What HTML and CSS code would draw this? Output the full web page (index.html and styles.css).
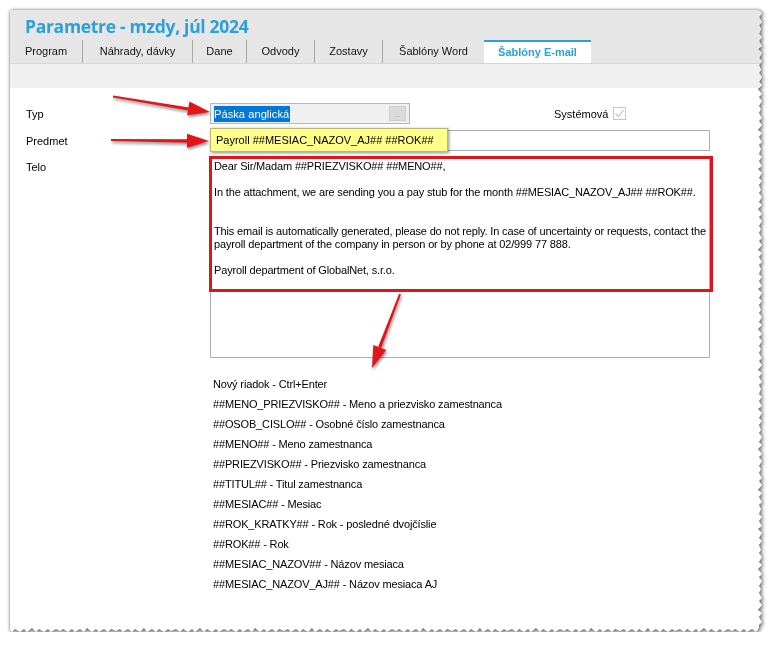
FILE: index.html
```html
<!DOCTYPE html>
<html lang="sk">
<head>
    <meta charset="UTF-8">
    <meta name="viewport" content="width=device-width, initial-scale=1.0">
    <title>Parametre - mzdy, júl 2024</title>
    <link rel="stylesheet" href="styles.css">
</head>
<body>
    <div class="shot">
        <div class="window" id="win">
            <div class="header">
                <h1 class="title">Parametre - mzdy, júl 2024</h1>
                <div class="tabs">
                    <div class="tab tab-program">Program</div>
                    <div class="tab tab-nahrady">Náhrady, dávky</div>
                    <div class="tab tab-dane">Dane</div>
                    <div class="tab tab-odvody">Odvody</div>
                    <div class="tab tab-zostavy">Zostavy</div>
                    <div class="tab tab-word">Šablóny Word</div>
                    <div class="tab tab-email active">Šablóny E-mail</div>
                </div>
            </div>
            <div class="toolbar"></div>

            <div class="content">
                <div class="row">
                    <div class="label">Typ</div>
                    <div class="select">
                        <span class="selected">Páska anglická</span>
                        <span class="dots">...</span>
                    </div>
                    <div class="system">
                        Systémová
                        <span class="check">
                            <svg width="11" height="11" viewBox="0 0 11 11"><path d="M1.5 5.5 L4.3 8.3 L9.6 2.2" fill="none" stroke="#c4c4c4" stroke-width="1.2"/></svg>
                        </span>
                    </div>
                </div>

                <div class="row">
                    <div class="label">Predmet</div>
                    <div class="input">
                        <span class="callout">Payroll ##MESIAC_NAZOV_AJ## ##ROK##</span>
                    </div>
                </div>

                <div class="row row-top">
                    <div class="label label-top">Telo</div>
                    <div class="textarea">
                        <div class="body-text">
                            <p>Dear Sir/Madam ##PRIEZVISKO## ##MENO##,</p>
                            <p>In the attachment, we are sending you a pay stub for the month ##MESIAC_NAZOV_AJ## ##ROK##.</p>
                            <p class="gap2">This email is automatically generated, please do not reply. In case of uncertainty or requests, contact the payroll department of the company in person or by phone at 02/999 77 888.</p>
                            <p>Payroll department of GlobalNet, s.r.o.</p>
                        </div>
                        <div class="red-box"></div>
                    </div>
                </div>

                <ul class="help">
                    <li>Nový riadok - Ctrl+Enter</li>
                    <li>##MENO_PRIEZVISKO## - Meno a priezvisko zamestnanca</li>
                    <li>##OSOB_CISLO## - Osobné číslo zamestnanca</li>
                    <li>##MENO## - Meno zamestnanca</li>
                    <li>##PRIEZVISKO## - Priezvisko zamestnanca</li>
                    <li>##TITUL## - Titul zamestnanca</li>
                    <li>##MESIAC## - Mesiac</li>
                    <li>##ROK_KRATKY## - Rok - posledné dvojčíslie</li>
                    <li>##ROK## - Rok</li>
                    <li>##MESIAC_NAZOV## - Názov mesiaca</li>
                    <li>##MESIAC_NAZOV_AJ## - Názov mesiaca AJ</li>
                </ul>
            </div>

            <!-- annotation arrows -->
            <svg class="arrows" width="752" height="622" viewBox="0 0 752 622">
                <g fill="#e4141b" stroke="none">
                    <polygon points="103,85.5 179,97.4 178.4,100.6 103,87.5"/>
                    <polygon points="200,102 177.2,105.3 179.4,91.5"/>
                    <polygon points="101,129 178,129.2 178,132.8 101,131"/>
                    <polygon points="199,131 177,137.8 177,123.8"/>
                    <polygon points="389.1,283.7 391,284.3 371.2,338 368.2,336.8"/>
                    <polygon points="362,358 363.3,334.9 376.3,339.9"/>
                </g>
            </svg>
        </div>
    </div>

    <script>
        // torn paper edge on the right and bottom side
        const win = document.getElementById('win');

        function tornEdge() {
            const w = win.offsetWidth;
            const h = win.offsetHeight;
            const pts = ['0px 0px', (w - 4) + 'px 0px'];
            let y = 0;
            let i = 0;
            while (y < h - 4) {
                const x = w - (i % 2 ? 0 : 3) - (i % 5 === 0 ? 1 : 0);
                pts.push(x + 'px ' + y + 'px');
                y += 3 + (i % 3);
                i++;
            }
            let x = w - 3;
            i = 0;
            while (x > 0) {
                const yy = h - (i % 2 ? 0 : 3) - (i % 7 === 0 ? 1 : 0);
                pts.push(x + 'px ' + yy + 'px');
                x -= 3 + (i % 3);
                i++;
            }
            pts.push('0px ' + (h - 2) + 'px');
            win.style.clipPath = 'polygon(' + pts.join(', ') + ')';
        }

        tornEdge();
    </script>
</body>
</html>
```

FILE: styles.css
```css
* {
    margin: 0;
    padding: 0;
    box-sizing: border-box;
}

body {
    font-family: "Liberation Sans", Arial, sans-serif;
    font-size: 11px;
    color: #000;
    background: #fff;
}

.shot {
    margin: 10px 0 0 10px;
    width: 752px;
    height: 622px;
    filter: drop-shadow(1px 1px 2px rgba(0,0,0,0.6)) drop-shadow(0 0 1px rgba(0,0,0,0.25));
}

.window {
    position: relative;
    width: 100%;
    height: 100%;
    background: #fff;
}

.header {
    background: #e6e6e6;
    border-bottom: 1px solid #d6d6d6;
}

.title {
    height: 30px;
    padding: 4px 0 0 15px;
    font-family: "Open Sans", "Liberation Sans", sans-serif;
    font-weight: 700;
    font-size: 17.5px;
    line-height: 24px;
    color: #2ba0d9;
    letter-spacing: -0.3px;
}

.tabs {
    display: flex;
    height: 23px;
}

.tab {
    line-height: 23px;
    text-align: center;
    border-right: 1px solid #a8a8a8;
    color: #111;
}

.tab-program { width: 73px; }
.tab-nahrady { width: 110px; }
.tab-dane { width: 54px; }
.tab-odvody { width: 68px; }
.tab-zostavy { width: 68px; }
.tab-word { width: 101px; border-right: none; }

.tab.active {
    width: 107px;
    background: #fff;
    border-top: 2px solid #2ba0d9;
    border-right: none;
    line-height: 21px;
    color: #2ba0d9;
    font-weight: bold;
}

.toolbar {
    height: 24px;
    background: #f0f0f0;
}

.content {
    padding: 15px 0 0 16px;
}

.row {
    display: flex;
    align-items: center;
    margin-bottom: 6px;
}

.row-top {
    align-items: flex-start;
}

.label {
    width: 184px;
}

.label-top {
    padding-top: 4px;
}

.select {
    position: relative;
    width: 200px;
    height: 21px;
    background: #f0f0f0;
    border: 1px solid #b8b8b8;
    display: flex;
    align-items: center;
    justify-content: space-between;
    padding: 0 3px;
}

.selected {
    background: #0078d7;
    color: #fff;
    font-size: 11.2px;
    line-height: 16px;
    padding-right: 1px;
}

.dots {
    width: 17px;
    height: 15px;
    background: #dadada;
    border: 1px solid #cdcdcd;
    color: #a0a0a0;
    font-size: 8px;
    line-height: 15px;
    text-align: center;
}

.system {
    margin-left: 144px;
    display: flex;
    align-items: center;
    gap: 5px;
}

.check {
    width: 13px;
    height: 13px;
    border: 1px solid #c6c6c6;
    background: #fff;
    display: flex;
    align-items: center;
    justify-content: center;
}

.input {
    position: relative;
    width: 500px;
    height: 21px;
    border: 1px solid #adadad;
    background: #fff;
}

.callout {
    position: absolute;
    left: -1px;
    top: -3px;
    width: 238px;
    height: 24px;
    padding-left: 5px;
    background: #ffff8a;
    border: 1px solid #b7b77a;
    box-shadow: 1px 1px 3px rgba(0,0,0,0.45);
    font-size: 11px;
    line-height: 22px;
    white-space: nowrap;
}

.textarea {
    position: relative;
    width: 500px;
    height: 202px;
    border: 1px solid #adadad;
    background: #fff;
    margin-top: -1px;
}

.body-text {
    padding: 3px 0 0 3px;
    line-height: 13px;
    letter-spacing: -0.15px;
}

.body-text p {
    margin-bottom: 13px;
}

.body-text p.gap2 {
    margin-top: 26px;
}

.red-box {
    position: absolute;
    left: -2px;
    top: -1px;
    width: 504px;
    height: 136px;
    border: 3px solid #e2141b;
}

.help {
    list-style: none;
    margin: 16px 0 0 187px;
    letter-spacing: -0.15px;
}

.help li {
    line-height: 20px;
}

.arrows {
    position: absolute;
    left: 0;
    top: 0;
    pointer-events: none;
    filter: drop-shadow(1px 2px 1.5px rgba(0,0,0,0.45));
}
```
